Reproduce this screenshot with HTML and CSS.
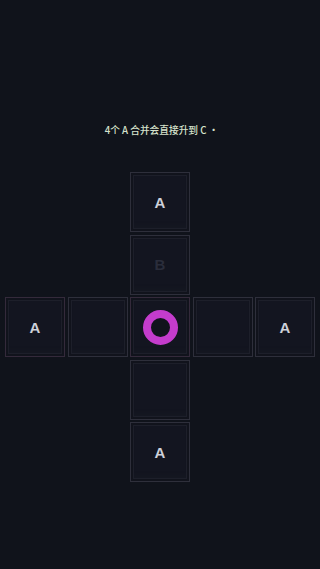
FILE: index.html
```html
<!DOCTYPE html>
<html>
<head>
<meta charset="utf-8">
<link rel="stylesheet" href="styles.css">
</head>
<body>
<div class="page">
  <div class="hint">4个 A 合并会直接升到 C ·</div>
  <div class="board">
    <div class="cell c3 r1"><span class="ltr">A</span></div>
    <div class="cell c3 r2"><span class="ltr dim">B</span></div>
    <div class="cell c1 r3 warm"><span class="ltr">A</span></div>
    <div class="cell c2 r3"></div>
    <div class="cell c3 r3 warm"><span class="ring"></span></div>
    <div class="cell c4 r3"></div>
    <div class="cell c5 r3"><span class="ltr">A</span></div>
    <div class="cell c3 r4"></div>
    <div class="cell c3 r5"><span class="ltr">A</span></div>
  </div>
</div>
</body>
</html>
```
FILE: styles.css
```css
html, body {
  margin: 0;
  padding: 0;
  background: #10131b;
}
.page {
  width: 320px;
  height: 569px;
  background: #10131b;
  font-family: "Noto Sans CJK SC", "Noto Sans", sans-serif;
  overflow: hidden;
}
.hint {
  padding-top: 123px;
  height: 14px;
  line-height: 14px;
  text-align: center;
  font-size: 9.7px;
  font-weight: 500;
  color: #d6e2cc;
  padding-left: 3px;
}
.board {
  margin: 35px 0 0 5px;
  width: 310px;
  display: grid;
  grid-template-columns: repeat(5, 60px);
  grid-template-rows: repeat(5, 60px);
  column-gap: 2.5px;
  row-gap: 2.5px;
}
.cell {
  box-sizing: border-box;
  border: 1px solid #2e2f3b;
  background: #131520;
  box-shadow: inset 0 0 0 2px #11131c, inset 0 0 0 3px #1d1f2a, inset 0 -6px 6px -4px #1b1d27;
  display: flex;
  align-items: center;
  justify-content: center;
}
.cell.warm {
  border-color: #342a3b;
}
.c1 { grid-column: 1; }
.c2 { grid-column: 2; }
.c3 { grid-column: 3; }
.c4 { grid-column: 4; }
.c5 { grid-column: 5; }
.r1 { grid-row: 1; }
.r2 { grid-row: 2; }
.r3 { grid-row: 3; }
.r4 { grid-row: 4; }
.r5 { grid-row: 5; }
.ltr {
  font-family: "Liberation Sans", Arial, sans-serif;
  font-weight: bold;
  font-size: 15px;
  color: #cdd0d9;
}
.ltr.dim {
  color: #2a2d3b;
}
.ring {
  width: 19px;
  height: 19px;
  border-radius: 50%;
  border: 8px solid #c43ccc;
  background: #11131c;
}
```
